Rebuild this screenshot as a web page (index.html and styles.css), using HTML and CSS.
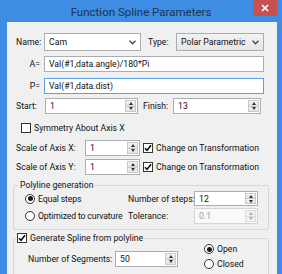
FILE: index.html
```html
<!DOCTYPE html>
<html>
<head>
<meta charset="utf-8">
<link rel="stylesheet" href="styles.css">
</head>
<body>
<div class="window">
  <div class="titlebar">
    <span class="title">Function Spline Parameters</span>
    <div class="close"><svg width="8" height="8" viewBox="0 0 8 8"><path d="M1 1L7 7M7 1L1 7" stroke="#fff" stroke-width="1.6"/></svg></div>
  </div>
  <div class="client">
    <div class="row r1">
      <label class="lbl w28">Name:</label>
      <div class="combo edit w97"><span>Cam</span><svg class="chev" width="7" height="5" viewBox="0 0 7 5"><path d="M0.5 0.8L3.5 3.8L6.5 0.8" fill="none" stroke="#444" stroke-width="1.3"/></svg></div>
      <label class="lbl type">Type:</label>
      <div class="combo list w88"><span>Polar Parametric</span><svg class="chev" width="7" height="5" viewBox="0 0 7 5"><path d="M0.5 0.8L3.5 3.8L6.5 0.8" fill="none" stroke="#444" stroke-width="1.3"/></svg></div>
    </div>
    <div class="row r2">
      <label class="lbl w28 right">A=</label>
      <div class="tb w220">Val(#1,data.angle)/180*Pi</div>
    </div>
    <div class="row r3">
      <label class="lbl w28 right">P=</label>
      <div class="tb focus w220">Val(#1,data.dist)</div>
    </div>
    <div class="row r4">
      <label class="lbl w29">Start:</label>
      <div class="tb spinbox w93"><span>1</span><div class="spin"><div class="sb"><i class="up"></i></div><div class="sb"><i class="dn"></i></div></div></div>
      <label class="lbl finish">Finish:</label>
      <div class="tb spinbox w88"><span>13</span><div class="spin"><div class="sb"><i class="up"></i></div><div class="sb"><i class="dn"></i></div></div></div>
    </div>
    <div class="row r5">
      <span class="cb"></span><span class="cbtext">Symmetry About Axis X</span>
    </div>
    <div class="row r6">
      <label class="lbl w69">Scale of Axis X:</label>
      <div class="tb spinbox w55"><span>1</span><div class="spin"><div class="sb"><i class="up"></i></div><div class="sb"><i class="dn"></i></div></div></div>
      <span class="cb checked ml3"><svg width="8" height="8" viewBox="0 0 8 8"><path d="M1 4.2L3 6.4L7 1.2" fill="none" stroke="#000" stroke-width="1.5"/></svg></span><span class="cbtext">Change on Transformation</span>
    </div>
    <div class="row r7">
      <label class="lbl w69">Scale of Axis Y:</label>
      <div class="tb spinbox w55"><span>1</span><div class="spin"><div class="sb"><i class="up"></i></div><div class="sb"><i class="dn"></i></div></div></div>
      <span class="cb checked ml3"><svg width="8" height="8" viewBox="0 0 8 8"><path d="M1 4.2L3 6.4L7 1.2" fill="none" stroke="#000" stroke-width="1.5"/></svg></span><span class="cbtext">Change on Transformation</span>
    </div>

    <fieldset class="grp g1">
      <legend>Polyline generation</legend>
      <div class="grow ga">
        <div class="opt"><span class="rb on"></span><span class="cbtext">Equal steps</span></div>
        <label class="glbl">Number of steps:</label>
        <div class="tb spinbox w64"><span>12</span><div class="spin"><div class="sb"><i class="up"></i></div><div class="sb"><i class="dn"></i></div></div></div>
      </div>
      <div class="grow gb">
        <div class="opt"><span class="rb"></span><span class="cbtext">Optimized to curvature</span></div>
        <label class="glbl">Tolerance:</label>
        <div class="tb spinbox w64 disabled"><span>0.1</span><div class="spin"><div class="sb"><i class="up"></i></div><div class="sb"><i class="dn"></i></div></div></div>
      </div>
    </fieldset>

    <fieldset class="grp g2">
      <legend><span class="cb checked"><svg width="8" height="8" viewBox="0 0 8 8"><path d="M1 4.2L3 6.4L7 1.2" fill="none" stroke="#000" stroke-width="1.5"/></svg></span><span class="cbtext">Generate Spline from polyline</span></legend>
      <div class="g2body">
        <div class="seg">
          <label class="seglbl">Number of Segments:</label>
          <div class="tb spinbox w63"><span>50</span><div class="spin"><div class="sb"><i class="up"></i></div><div class="sb"><i class="dn"></i></div></div></div>
        </div>
        <div class="radios">
          <div class="ropt"><span class="rb on"></span><span class="cbtext">Open</span></div>
          <div class="ropt"><span class="rb"></span><span class="cbtext">Closed</span></div>
        </div>
      </div>
    </fieldset>
  </div>
</div>
</body>
</html>
```

FILE: styles.css
```css
* { box-sizing: border-box; }
html, body { margin: 0; padding: 0; background: #3c8de3; }
body {
  font-family: Roboto, "Liberation Sans", sans-serif;
  font-size: 8.7px;
  color: #111;
}
.window {
  width: 282px;
  height: 274px;
  background: #3c8de3;
  padding-left: 7px;
  padding-right: 5px;
  position: relative;
  overflow: hidden;
  display: flex;
  flex-direction: column;
}
.titlebar {
  height: 22px;
  margin: 0 -5px 0 -7px;
  display: flex;
  align-items: center;
  justify-content: center;
  flex: none;
}
.title {
  font-size: 11.5px;
  color: #1c3352;
  margin-top: 1px;
}
.close {
  position: absolute;
  top: 0;
  left: 253px;
  width: 24px;
  height: 16px;
  background: #c75050;
  display: flex;
  align-items: center;
  justify-content: center;
}
.close svg { display: block; }
.client {
  flex: 1;
  background: #f0f0f0;
  padding-left: 9px;
  padding-top: 11px;
  display: flex;
  flex-direction: column;
}
.row { display: flex; align-items: center; flex: none; }
.r1 { height: 18px; }
.r2 { height: 16px; margin-top: 5px; }
.r3 { height: 16px; margin-top: 6px; }
.r4 { height: 16px; margin-top: 4px; }
.r5 { height: 12px; margin-top: 8px; padding-left: 5px; }
.r6 { height: 16px; margin-top: 6px; }
.r7 { height: 16px; margin-top: 3px; }

.lbl { flex: none; white-space: nowrap; }
.w28 { width: 28px; }
.w29 { width: 29px; }
.w69 { width: 69px; }
.right { text-align: right; padding-right: 4px; }
.type { margin-left: 7px; width: 28px; }
.finish { margin-left: 5px; width: 30px; }

.tb, .combo {
  flex: none;
  height: 100%;
  display: flex;
  align-items: center;
  background: #fff;
  border: 1px solid #abadb3;
  padding-left: 4px;
  white-space: nowrap;
  overflow: hidden;
}
.combo.list {
  background: linear-gradient(#f2f2f2, #e6e6e6);
  border-color: #acacac;
}
.chev { margin-left: auto; margin-right: 4px; display: block; }
.focus { border-color: #5d9fe3; }
.w97 { width: 97px; }
.w88 { width: 88px; }
.w220 { width: 220px; }
.w93 { width: 93px; }
.w55 { width: 55px; }
.w64 { width: 64px; }
.w63 { width: 63px; }

.spinbox { padding-right: 1px; }
.spin {
  margin-left: auto;
  width: 11px;
  height: 100%;
  padding: 1px 0;
  display: flex;
  flex-direction: column;
}
.sb {
  flex: 1;
  background: linear-gradient(#f3f3f3, #e2e2e2);
  border: 1px solid #c9c9c9;
  display: flex;
  align-items: center;
  justify-content: center;
}
.sb + .sb { border-top: none; }
.sb i { display: block; width: 0; height: 0; border-left: 2.5px solid transparent; border-right: 2.5px solid transparent; }
.sb i.up { border-bottom: 3px solid #333; }
.sb i.dn { border-top: 3px solid #333; }
.disabled { color: #9a9a9a; border-color: #d5d5d5; background: #f9f9f9; }
.disabled .sb { background: #f1f1f1; border-color: #dedede; }
.disabled .sb i.up { border-bottom-color: #b0b0b0; }
.disabled .sb i.dn { border-top-color: #b0b0b0; }

.cb {
  flex: none;
  width: 10px;
  height: 10px;
  border: 1px solid #333;
  background: #fff;
  display: inline-flex;
  align-items: center;
  justify-content: center;
}
.cb svg { display: block; }
.ml3 { margin-left: 3px; }
.cbtext { margin-left: 3px; white-space: nowrap; }

.rb {
  flex: none;
  width: 10px;
  height: 10px;
  border: 1px solid #333;
  border-radius: 50%;
  background: #fff;
  display: inline-flex;
  align-items: center;
  justify-content: center;
}
.rb.on::after {
  content: "";
  width: 5px;
  height: 5px;
  border-radius: 50%;
  background: #1a1a1a;
}

.grp {
  flex: none;
  margin: 0 0 0 -3px;
  width: 256px;
  border: 1px solid #d8d8d8;
  border-radius: 2px;
  padding: 0;
  min-width: 0;
}
.grp legend {
  padding: 0 2px;
  margin-left: 4px;
  height: 12px;
  line-height: 12px;
  display: flex;
  align-items: center;
}
.g1 { margin-top: 4px; height: 51px; }
.g2 { margin-top: 2px; height: 60px; }
.g2 legend { margin-left: 2px; padding: 0 1px; }

.grow { display: flex; align-items: center; height: 15px; flex: none; }
.ga { margin-top: 0; }
.gb { margin-top: 2px; height: 16px; }
.opt { width: 114px; padding-left: 11px; display: flex; align-items: center; flex: none; letter-spacing: -0.15px; }
.glbl { width: 66px; flex: none; white-space: nowrap; }

.g2body { display: flex; align-items: flex-start; }
.seg { display: flex; align-items: center; height: 16px; margin-top: 7px; padding-left: 14px; }
.seglbl { width: 87px; flex: none; white-space: nowrap; }
.radios { margin-left: 26px; display: flex; flex-direction: column; gap: 5px; margin-top: 0; }
.ropt { display: flex; align-items: center; height: 10px; }
```
